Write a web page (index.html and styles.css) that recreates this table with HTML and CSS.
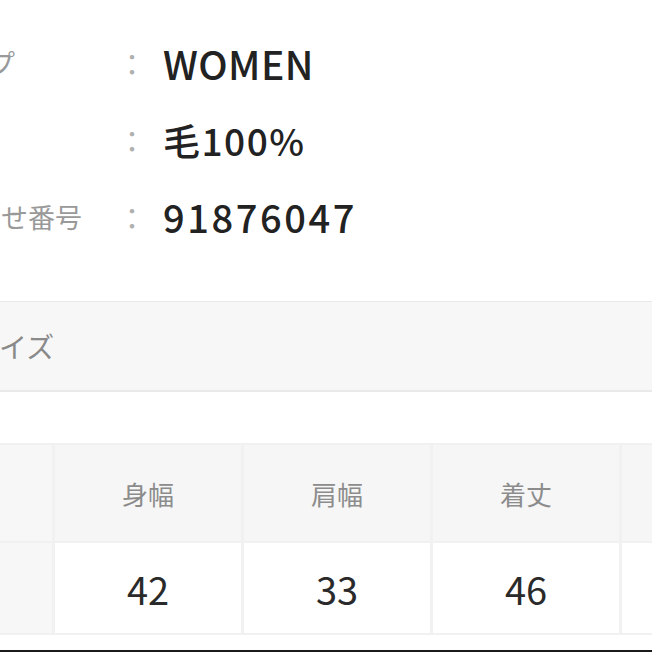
FILE: index.html
```html
<!DOCTYPE html>
<html lang="ja">
<head>
<meta charset="utf-8">
<link rel="stylesheet" href="styles.css">
</head>
<body>
<div class="page">
  <dl class="spec">
    <div class="spec-row">
      <dt class="spec-label spec-label-wide">性別タイプ</dt>
      <dd class="spec-colon">：</dd>
      <dd class="spec-value value-word">WOMEN</dd>
    </div>
    <div class="spec-row">
      <dt class="spec-label">素材</dt>
      <dd class="spec-colon">：</dd>
      <dd class="spec-value">毛100%</dd>
    </div>
    <div class="spec-row">
      <dt class="spec-label">お問い合わせ番号</dt>
      <dd class="spec-colon">：</dd>
      <dd class="spec-value value-num">91876047</dd>
    </div>
  </dl>

  <div class="section-head">サイズ</div>

  <table class="size-table">
    <tr class="head-row">
      <th class="corner"></th>
      <th>身幅</th>
      <th>肩幅</th>
      <th>着丈</th>
      <th>袖丈</th>
    </tr>
    <tr class="data-row">
      <th class="corner"></th>
      <td>42</td>
      <td>33</td>
      <td>46</td>
      <td>58</td>
    </tr>
  </table>
</div>
<div class="bottom-bar"></div>
</body>
</html>
```
FILE: styles.css
```css
html, body {
  margin: 0;
  padding: 0;
  background: #ffffff;
}
body {
  width: 652px;
  height: 652px;
  overflow: hidden;
  position: relative;
  font-family: "Noto Sans CJK JP", "Noto Sans", sans-serif;
}
.page {
  margin-left: -134px;
  width: 1000px;
}
.spec {
  margin: 0;
  padding-top: 24px;
}
.spec-row {
  display: flex;
  align-items: center;
  height: 77px;
}
.spec-label {
  width: 251px;
  flex: none;
  font-size: 27px;
  color: #999999;
  white-space: nowrap;
  overflow: hidden;
}
.spec-label-wide {
  letter-spacing: 3.5px;
}
.spec-colon {
  margin: 0;
  width: 30px;
  flex: none;
  text-align: center;
  font-size: 29px;
  color: #b0b0b0;
}
.spec-value {
  margin: 0 0 0 16px;
  font-size: 37px;
  font-weight: 500;
  color: #222222;
  letter-spacing: 1.5px;
}
.value-word {
  font-size: 39px;
  letter-spacing: 0.5px;
}
.value-num {
  font-size: 38px;
  letter-spacing: 2.6px;
}
.section-head {
  margin-top: 46px;
  height: 88px;
  background: #f7f7f7;
  border-top: 1px solid #e9e9e9;
  border-bottom: 2px solid #e9e9e9;
  display: flex;
  align-items: center;
  padding-left: 105px;
  font-size: 28px;
  color: #8a8a8a;
}
.size-table {
  margin-top: 51px;
  border-collapse: separate;
  border-spacing: 3px 2px;
  margin-left: -3px;
  background: #f1f1f1;
}
.size-table th,
.size-table td {
  width: 186px;
  padding: 0;
  text-align: center;
}
.head-row th {
  height: 96px;
  background: #f6f6f6;
  font-size: 26px;
  font-weight: 400;
  color: #8c8c8c;
}
.data-row td,
.data-row th {
  height: 90px;
}
.data-row td {
  background: #ffffff;
  font-size: 38px;
  color: #2a2a2a;
}
.size-table th.corner {
  background: #f7f7f7;
}
.bottom-bar {
  position: absolute;
  left: 0;
  right: 0;
  bottom: 0;
  height: 2px;
  background: #1a1a1a;
}
```
